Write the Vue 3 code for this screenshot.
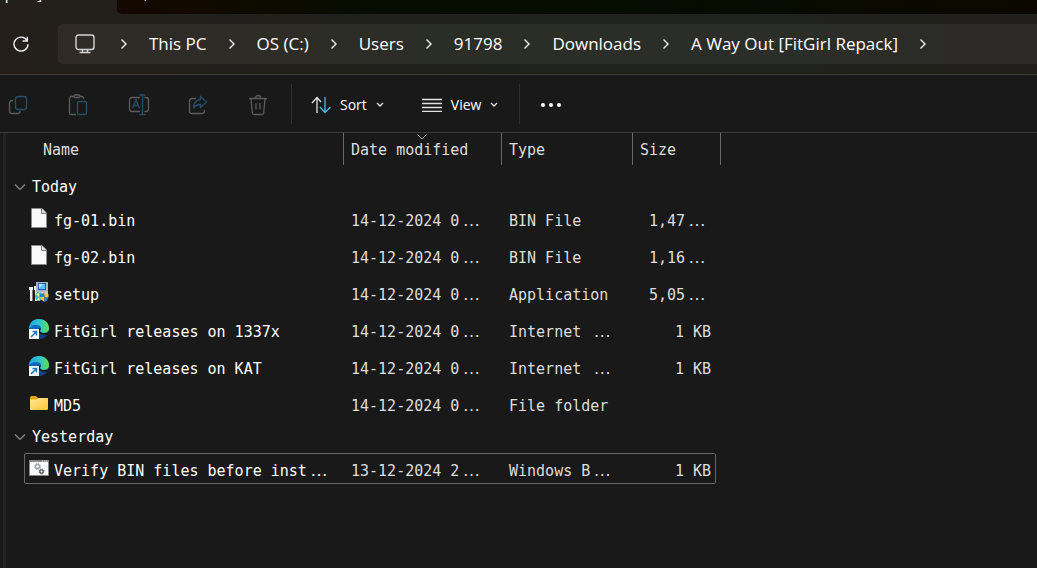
<script setup>
const crumbs = ['This PC', 'OS (C:)', 'Users', '91798', 'Downloads', 'A Way Out [FitGirl Repack]']

const groups = [
  {
    label: 'Today',
    files: [
      { icon: 'file', name: 'fg-01.bin', date: '14-12-2024 0', type: 'BIN File', size: '1,47', cutSize: true },
      { icon: 'file', name: 'fg-02.bin', date: '14-12-2024 0', type: 'BIN File', size: '1,16', cutSize: true },
      { icon: 'setup', name: 'setup', date: '14-12-2024 0', type: 'Application', size: '5,05', cutSize: true },
      { icon: 'edge', name: 'FitGirl releases on 1337x', date: '14-12-2024 0', type: 'Internet ', cutType: true, size: '1 KB' },
      { icon: 'edge', name: 'FitGirl releases on KAT', date: '14-12-2024 0', type: 'Internet ', cutType: true, size: '1 KB' },
      { icon: 'folder', name: 'MD5', date: '14-12-2024 0', type: 'File folder', size: '' },
    ],
  },
  {
    label: 'Yesterday',
    files: [
      { icon: 'batch', name: 'Verify BIN files before inst', cutName: true, date: '13-12-2024 2', type: 'Windows B', cutType: true, size: '1 KB', focused: true },
    ],
  },
]
</script>

<template>
  <div class="window">
    <header class="top">
      <div class="tabs">
        <span class="tab">Repack]</span>
        <div class="strip"><span>,</span></div>
      </div>
      <div class="address">
        <button class="refresh" aria-label="Refresh">
          <svg width="18" height="18" viewBox="0 0 18 18"><path d="M15 5.500A7 7 0 1 0 16 9.200M15.300 1.800v4.200h-4.700" /></svg>
        </button>
        <nav class="crumbs" aria-label="Path">
          <svg class="pc" width="20" height="20" viewBox="0 0 20 20"><rect x="1" y="1" width="18" height="14.500" rx="2.500" /><path d="M7.500 16v2.500M12.500 16v2.500M4.500 18.500h11" /></svg>
          <svg class="chev" width="8" height="12" viewBox="0 0 8 12"><path d="M1.500 1.500 6 6 1.500 10.500" /></svg>
          <template v-for="c in crumbs" :key="c">
            <a href="#">{{ c }}</a>
            <svg class="chev" width="8" height="12" viewBox="0 0 8 12"><path d="M1.500 1.500 6 6 1.500 10.500" /></svg>
          </template>
        </nav>
      </div>
    </header>

    <div class="commands">
      <div class="tools">
        <button aria-label="Copy" disabled>
          <svg width="20" height="20" viewBox="0 0 20 20"><path d="M5 5.500H4A2.500 2.500 0 0 0 1.500 8v8A2.500 2.500 0 0 0 4 18.500h5.500A2.500 2.500 0 0 0 12 16" /><rect class="blue" x="7.500" y="1.500" width="11" height="13" rx="2.500" /></svg>
        </button>
        <button aria-label="Paste" disabled>
          <svg width="20" height="22" viewBox="0 0 20 22"><path d="M6 2.500H3A1.500 1.500 0 0 0 1.500 4v15A1.500 1.500 0 0 0 3 20.500h5M12 2.500h2A1.500 1.500 0 0 1 15.500 4v1" /><rect x="6" y="1" width="6" height="2.500" rx="1.200" /><rect class="blue" x="9.500" y="7.500" width="9" height="13" rx="1.500" /></svg>
        </button>
        <button aria-label="Rename" disabled>
          <svg width="22" height="22" viewBox="0 0 22 22"><path d="M12 3.500H4A2.500 2.500 0 0 0 1.500 6v9A2.500 2.500 0 0 0 4 17.500h8M16.500 3.500H18A2.500 2.500 0 0 1 20.500 6v9A2.500 2.500 0 0 1 18 17.500h-1.500" /><path class="blue" d="m4.500 14.500 3.500-9 3.500 9M5.800 11.500h4.500M14.500 1v19.500M11.500 1h6M11.500 20.500h6" /></svg>
        </button>
        <button aria-label="Share" disabled>
          <svg width="20" height="20" viewBox="0 0 20 20"><path d="M8 3.500H4A2.500 2.500 0 0 0 1.500 6v10A2.500 2.500 0 0 0 4 18.500h10a2.500 2.500 0 0 0 2.500-2.500v-1" /><path class="blue" d="M12.500 1.500 18.500 7l-6 5.500V9.500C9.500 9.500 7 10.500 5.500 13.500 5.500 8 8.500 5 12.500 4.500Z" /></svg>
        </button>
        <button aria-label="Delete" disabled>
          <svg width="20" height="22" viewBox="0 0 20 22"><path d="M1 4.500h18M3 4.500l1.300 14.200a2 2 0 0 0 2 1.800h7.400a2 2 0 0 0 2-1.800L17 4.500M7.500 4a2.500 2.500 0 0 1 5 0M8 9v6.500M12 9v6.500" /></svg>
        </button>
      </div>
      <button class="labelled sort">
        <svg width="20" height="18" viewBox="0 0 20 18"><path d="M6 17V2M1 7l5-5.500L10 6" /><path class="bright" d="M14 1v15M9 11l5 5.500 5.500-5.500" /></svg>
        Sort
        <svg class="down" width="8" height="6" viewBox="0 0 8 6"><path d="m1 1 3 3 3-3" /></svg>
      </button>
      <button class="labelled view">
        <svg width="20" height="14" viewBox="0 0 20 14"><path d="M0 1.500h20M0 5.500h20M0 9.500h20M0 13.500h20" /></svg>
        View
        <svg class="down" width="8" height="6" viewBox="0 0 8 6"><path d="m1 1 3 3 3-3" /></svg>
      </button>
      <button class="more" aria-label="See more">
        <svg width="22" height="6" viewBox="0 0 22 6"><circle cx="3" cy="3" r="2" /><circle cx="11" cy="3" r="2" /><circle cx="19" cy="3" r="2" /></svg>
      </button>
    </div>

    <main class="files">
      <table>
        <colgroup><col class="c-name" /><col class="c-date" /><col class="c-type" /><col class="c-size" /></colgroup>
        <thead>
          <tr>
            <th><button>Name</button></th>
            <th>
              <button>Date modified</button>
              <svg class="sorted" width="10" height="6" viewBox="0 0 10 6"><path d="m.5.5 4.500 4.500 4.500-4.500" /></svg>
            </th>
            <th><button>Type</button></th>
            <th><button>Size</button></th>
          </tr>
        </thead>
        <tbody v-for="g in groups" :key="g.label">
          <tr class="group">
            <td colspan="4">
              <button>
                <svg width="12" height="8" viewBox="0 0 12 8"><path d="m1 1.500 5 5 5-5" /></svg>{{ g.label }}
              </button>
            </td>
          </tr>
          <tr v-for="f in g.files" :key="f.name" class="row" :class="{ focused: f.focused }">
            <td class="name">
              <div>
                <svg v-if="f.icon === 'file'" width="20" height="20" viewBox="0 0 20 20"><path fill="#fafafa" stroke="#8a8a8a" d="M2.500.5h10.500L17.500 5v14.500h-15Z" /><path fill="#e4e4e4" stroke="#777" d="M12.500.5v5h5" /></svg>
                <svg v-else-if="f.icon === 'setup'" width="20" height="20" viewBox="0 0 20 20">
                  <path fill="#eee" d="M0 5h4v3H3v11H1V8H0zM5 4h4v15H6V8H5z" /><path fill="#777" d="M3 8h1v11H3zM8 8h1v11H8z" />
                  <path fill="#aeb4b8" d="M7 0h12v10H7z" /><path fill="#245ca8" d="M9 1h8v7H9z" /><path fill="#55c9ff" d="M10 2h6v5h-6z" /><path fill="#bdf1ff" d="M10 2h4l-4 4z" />
                  <path fill="#c9cfd2" d="M9 10h10v3H9z" /><circle cx="10" cy="14.500" r="4" fill="#31c4c9" /><path fill="#e8f38d" d="m10 15-3-3 3-1zM10 15l1 4-3-1z" />
                  <path fill="#2580d8" d="M11 12q3 0 4.500-1.500V15H11z" /><path fill="#ffc928" d="M15.500 10.500Q17 12 19.500 12v3h-4z" /><path fill="#ffc928" d="M11 15h4.500v5Q12 18.500 11 15z" /><path fill="#2580d8" d="M15.500 15h4q-.5 3.500-4 5z" />
                </svg>
                <svg v-else-if="f.icon === 'edge'" width="20" height="20" viewBox="0 0 20 20">
                  <defs><linearGradient id="wave"><stop offset="0" stop-color="#1da4e8" /><stop offset=".55" stop-color="#2fc5c8" /><stop offset="1" stop-color="#63df4c" /></linearGradient></defs>
                  <circle cx="10" cy="10" r="10" fill="#0c69bd" />
                  <path fill="#123f83" d="M8 10c-1 5 4 8 10 5-2 3-5 5-8 5-5 0-7-6-2-10z" />
                  <path fill="url(#wave)" d="M0 10C0 4 4 0 10 0s10 4 10 9c0 4-3 5-6 5-2 0-3-1-3-2s1-1 1-3c0-2-2-3-5-3-4 0-6 2-7 4z" />
                  <path fill="#191919" d="M8.500 11c.8-1.500 2-2 3.300-1.500-.2 1.500-1.400 2-.4 3.300 1.600 1.500 5 1.900 8.600-.3v2.500c-4 2.500-11 1-11.500-4z" />
                  <path fill="#fff" d="M0 10h10v10H0z" /><path fill="none" stroke="#1476c6" stroke-width="1.500" d="m2 18 5.500-5.500M3.500 12.500h4v4" />
                </svg>
                <svg v-else-if="f.icon === 'folder'" width="20" height="20" viewBox="0 0 20 20">
                  <defs><linearGradient id="fold" x2="1" y2="1"><stop offset="0" stop-color="#ffe79a" /><stop offset="1" stop-color="#fdc733" /></linearGradient></defs>
                  <path fill="#e9a50f" d="M1 4.500A1.500 1.500 0 0 1 2.500 3H7l2 2h9a1 1 0 0 1 1 1v6H1z" /><path fill="url(#fold)" d="M1 6.500h6.500L9.500 5H19v10.500a1.300 1.300 0 0 1-1.300 1.500H2.300A1.300 1.300 0 0 1 1 15.500z" />
                </svg>
                <svg v-else width="20" height="20" viewBox="0 0 20 20">
                  <path fill="#fafafa" stroke="#888" d="M.5 2.500h19v15H.5z" /><path fill="#888" d="M0 2h20v2H0z" /><path stroke="#eee" stroke-dasharray="1 1" d="M13 3h6" />
                  <circle cx="8.500" cy="8.500" r="2" fill="none" stroke="#9aa2aa" stroke-width="1.300" /><circle cx="8.500" cy="8.500" r="3" fill="none" stroke="#9aa2aa" stroke-dasharray="1.200 1.156" />
                  <circle cx="12.500" cy="13.500" r="1.700" fill="none" stroke="#4c5358" stroke-width="1.200" /><circle cx="12.500" cy="13.500" r="2.500" fill="none" stroke="#4c5358" stroke-dasharray="1 .963" />
                </svg>
                <span>{{ f.name }}<i v-if="f.cutName">…</i></span>
              </div>
            </td>
            <td>{{ f.date }}<i>…</i></td>
            <td>{{ f.type }}<i v-if="f.cutType">…</i></td>
            <td class="size" :class="{ cut: f.cutSize }">{{ f.size }}<i v-if="f.cutSize">…</i></td>
          </tr>
        </tbody>
      </table>
    </main>
  </div>
</template>

<style>
body {
  background: #191919;
}
</style>

<style scoped>
.window {
  min-height: 100vh;
  display: flex;
  flex-direction: column;
  background: #191919;
  color: #fff;
  font-family: "Open Sans", "Noto Sans", sans-serif;
}
button {
  border: 0;
  padding: 0;
  background: none;
  color: inherit;
  font: inherit;
}
svg {
  display: block;
  flex: none;
}
.top {
  background: linear-gradient(90deg, #241f1b, #20211c 40%, #20231d 70%, #211f1b);
  border-bottom: 1px solid #3b3b3b;
}
.tabs {
  display: flex;
  height: 14px;
  overflow: hidden;
}
.tab {
  width: 130px;
  margin: -17px 0 0 -13px;
  font-size: 15px;
  line-height: 20px;
}
.strip {
  flex: 1;
  border-bottom-left-radius: 5px;
  background: linear-gradient(90deg, #150800, #080c00 25%, #050c00 55%, #0c0800);
}
.strip span {
  display: block;
  margin: -16px 0 0 27px;
  font-size: 14px;
  line-height: 20px;
}
.address {
  display: flex;
  align-items: center;
  padding: 10px 0;
}
.refresh {
  width: 58px;
  display: flex;
  padding-left: 12px;
}
.refresh svg,
.crumbs svg {
  fill: none;
  stroke: #f0f0f0;
  stroke-width: 1.4;
}
.crumbs {
  flex: 1;
  display: flex;
  align-items: center;
  height: 40px;
  padding-left: 17px;
  border-radius: 5px 0 0 5px;
  background: linear-gradient(90deg, #302b27, #2b2d27 40%, #2b2e28 70%, #2c2a27);
}
.crumbs .pc {
  margin-right: 4px;
  stroke: #d5d5d5;
}
.crumbs .chev {
  margin: 0 21px;
}
.crumbs a {
  color: #fff;
  font-size: 17px;
  line-height: 24px;
  text-decoration: none;
  white-space: nowrap;
}
.commands {
  display: flex;
  align-items: center;
  height: 57px;
  border-bottom: 1px solid #3b3b3b;
}
.commands svg {
  fill: none;
  stroke: #e4e4e4;
  stroke-width: 1.3;
}
.tools {
  display: flex;
  align-items: center;
  gap: 38px;
  box-sizing: border-box;
  height: 40px;
  width: 292px;
  padding: 2px 0 0 8px;
  border-right: 1px solid #2e2e2e;
}
.tools button {
  width: 22px;
  display: flex;
}
.commands .tools svg {
  stroke: #5c5c5c;
}
.commands .tools .blue {
  stroke: #265069;
}
.commands .bright {
  stroke: #4cb8f5;
}
.labelled {
  display: flex;
  align-items: center;
  gap: 9px;
  padding-top: 2px;
  font-size: 14px;
  line-height: 20px;
}
.sort {
  margin-left: 19px;
}
.view {
  box-sizing: border-box;
  margin-left: 38px;
  height: 40px;
  padding-right: 21px;
  border-right: 1px solid #2e2e2e;
}
.more {
  margin-left: 20px;
  padding-top: 2px;
}
.commands .more svg {
  fill: #fff;
  stroke: none;
}
.files {
  flex: 1;
  margin-left: 3px;
  padding-left: 8px;
  border-left: 3px solid #242424;
  font-family: "DejaVu Sans Mono", "Liberation Mono", monospace;
  font-size: 15px;
  line-height: 20px;
}
table {
  width: 707px;
  table-layout: fixed;
  border-collapse: separate;
  border-spacing: 0;
}
.c-name { width: 330px; }
.c-date { width: 158px; }
.c-type { width: 131px; }
.c-size { width: 88px; }
th {
  position: relative;
  box-sizing: border-box;
  height: 32px;
  padding: 2px 0 0 7px;
  border-right: 1px solid #6a6a6a;
  text-align: left;
  font-weight: 400;
  color: #dedede;
}
th:first-child {
  padding-left: 29px;
}
.sorted {
  position: absolute;
  left: 73px;
  top: 1px;
  fill: none;
  stroke: #aaa;
}
thead::after {
  content: "";
  display: block;
  height: 8px;
}
.group td {
  height: 28px;
  padding: 0;
}
.group button {
  display: flex;
  align-items: center;
  gap: 6px;
}
.group svg {
  fill: none;
  stroke: #8c8c8c;
  stroke-width: 1.2;
}
.row td {
  box-sizing: border-box;
  height: 37px;
  padding: 2px 0 0 7px;
  white-space: pre;
  color: #dedede;
}
.row td.name {
  padding-left: 15px;
  color: #fff;
}
.name div {
  display: flex;
  align-items: center;
  gap: 5px;
}
.name svg {
  margin-bottom: 5px;
}
.row td.size {
  padding-right: 10px;
  text-align: right;
}
.row td.cut {
  padding-right: 15px;
}
i {
  margin-left: 3px;
  font-family: "Liberation Sans", sans-serif;
  font-size: 18px;
  font-style: normal;
  line-height: 1;
}
.focused {
  position: relative;
}
.focused::after {
  content: "";
  position: absolute;
  inset: 2px 5px 4px 10px;
  border: 1px solid #666;
  border-radius: 2px;
}
</style>
